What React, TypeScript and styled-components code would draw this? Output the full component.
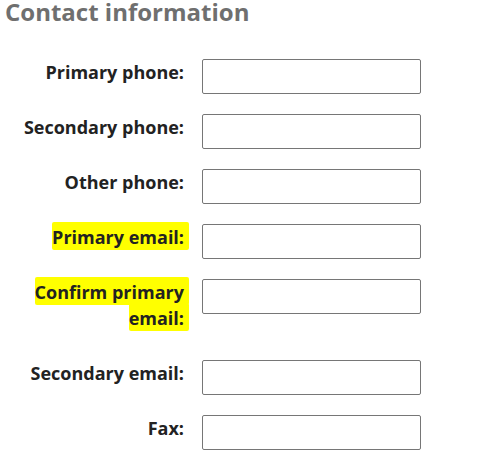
import React from "react";
import styled, { createGlobalStyle } from "styled-components";

const Global = createGlobalStyle`
  html, body { margin: 0; padding: 0; background: #ffffff; }
  body { font-family: "Open Sans", "Liberation Sans", sans-serif; }
`;

const Page = styled.div`
  padding: 0 0 0 5px;
`;

const Heading = styled.h2`
  margin: 0;
  font-size: 24px;
  line-height: 24px;
  font-weight: 700;
  color: #6f6f6f;
`;

const Form = styled.form`
  display: grid;
  grid-template-columns: 179px 219px;
  column-gap: 18px;
  row-gap: 20px;
  margin-top: 35px;
  align-items: start;
`;

const Label = styled.label`
  text-align: right;
  font-size: 18px;
  font-weight: 700;
  line-height: 26px;
  color: #222222;
  padding: 0 0 9px;
`;

const Mark = styled.span`
  background: #ffff00;
  padding: 3px 5px 1px 0;
  margin-right: -5px;
  border-radius: 2px;
  -webkit-box-decoration-break: clone;
  box-decoration-break: clone;
`;

const Field = styled.input`
  box-sizing: border-box;
  width: 219px;
  height: 35px;
  margin: 0;
  border: 1px solid #767676;
  border-radius: 2px;
  background: #fff;
`;

type Row = { label: string; highlight?: boolean; id: string };

const rows: Row[] = [
  { id: "p1", label: "Primary phone:" },
  { id: "p2", label: "Secondary phone:" },
  { id: "p3", label: "Other phone:" },
  { id: "e1", label: "Primary email:", highlight: true },
  { id: "e2", label: "Confirm primary email:", highlight: true },
  { id: "e3", label: "Secondary email:" },
  { id: "fx", label: "Fax:" },
];

export default function App() {
  return (
    <Page>
      <Global />
      <Heading>Contact information</Heading>
      <Form onSubmit={(e) => e.preventDefault()}>
        {rows.map((r) => (
          <React.Fragment key={r.id}>
            <Label htmlFor={r.id}>
              {r.highlight ? <Mark>{r.label}</Mark> : r.label}
            </Label>
            <Field id={r.id} type="text" />
          </React.Fragment>
        ))}
      </Form>
    </Page>
  );
}
